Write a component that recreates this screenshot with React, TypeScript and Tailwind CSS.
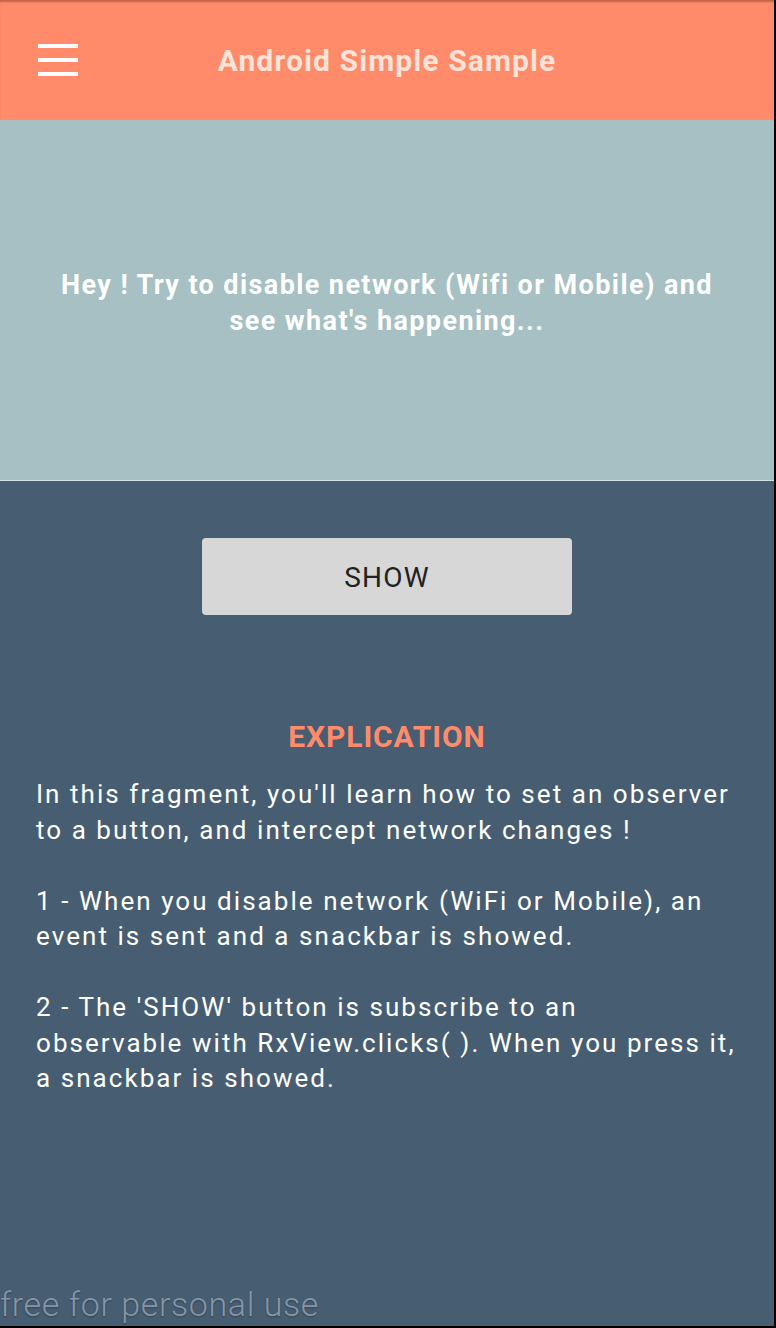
const paragraphs = [
  ["In this fragment, you'll learn how to set an observer", "to a button, and intercept network changes !"],
  ["1 - When you disable network (WiFi or Mobile), an", "event is sent and a snackbar is showed."],
  [
    "2 - The 'SHOW' button is subscribe to an",
    "observable with RxView.clicks( ). When you press it,",
    "a snackbar is showed.",
  ],
];

function MenuIcon() {
  return (
    <svg width="40" height="34" viewBox="0 0 40 34" className="block">
      <rect x="0" y="0" width="40" height="4" fill="#ffffff" />
      <rect x="0" y="14" width="40" height="4" fill="#ffffff" />
      <rect x="0" y="28" width="40" height="4" fill="#ffffff" />
    </svg>
  );
}

export default function App() {
  return (
    <div className="flex h-[1328px] w-[776px] flex-col bg-black font-['Roboto',sans-serif]">
      <div className="flex flex-1">
        <div className="flex w-[774px] flex-col bg-[#475d72]">
          {/* toolbar */}
          <header className="relative flex h-[120px] items-center justify-center bg-[#ff8b6a] shadow-[inset_0_3px_2px_-1px_rgba(120,50,30,0.45)]">
            <div className="absolute left-[38px] top-[44px]">
              <MenuIcon />
            </div>
            <h1 className="text-[30px] font-bold tracking-[1.1px] text-[#ffe3d8]">
              Android Simple Sample
            </h1>
          </header>

          <section className="flex h-[361px] items-center justify-center border-b border-[#d5e1e3] bg-[#a6c0c3]">
            <p className="mt-[6px] text-center text-[27px] font-bold leading-[36px] tracking-[1.4px] text-white">
              Hey ! Try to disable network (Wifi or Mobile) and
              <br />
              see what's happening...
            </p>
          </section>

          <div className="flex justify-center pt-[57px]">
            <button className="flex h-[77px] w-[370px] items-center justify-center rounded-[4px] bg-[#d6d7d6] pt-[3px] text-[28px] tracking-[1.2px] text-[#222222]">
              SHOW
            </button>
          </div>

          <h2 className="mt-[102px] text-center text-[30px] font-bold leading-[40px] tracking-[0.9px] text-[#ff8b6a]">
            EXPLICATION
          </h2>

          <div className="mt-[20px] flex flex-col gap-[35.5px] pl-[36px] text-[26px] leading-[35.5px] tracking-[2.05px] text-white">
            {paragraphs.map((lines, i) => (
              <p key={i}>
                {lines.map((line, j) => (
                  <span key={j} className="block whitespace-nowrap">
                    {line}
                  </span>
                ))}
              </p>
            ))}
          </div>

          <div className="mt-auto pb-[2px] text-[34px] font-light leading-[40px] tracking-[0.6px] text-[#8596a6] [text-shadow:0_1px_2px_rgba(0,0,0,0.3)]">
            free for personal use
          </div>
        </div>
        <div className="w-[2px]" />
      </div>
      <div className="h-[2px]" />
    </div>
  );
}
